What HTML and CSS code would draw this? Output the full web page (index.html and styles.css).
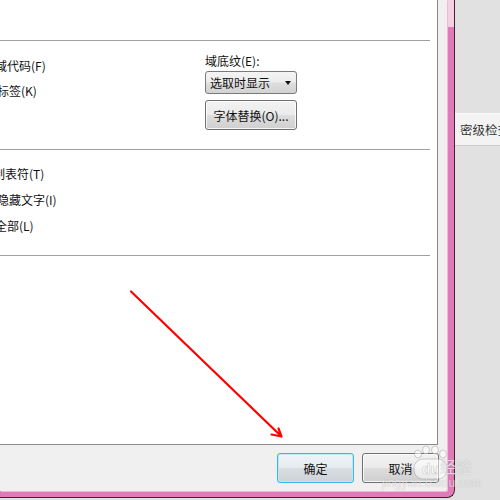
FILE: index.html
```html
<!DOCTYPE html>
<html lang="zh-CN">
<head>
<meta charset="utf-8">
<title>选项</title>
<link rel="stylesheet" href="styles.css">
</head>
<body>
<div class="window">
  <div class="client">
    <div class="panel">
      <div class="top"></div>
      <div class="sep"></div>
      <div class="sec1">
        <div class="col-left">
          <div class="row cut5">域代码(F)</div>
          <div class="row cut3">标签(K)</div>
        </div>
        <div class="col-right">
          <div class="label">域底纹(E):</div>
          <div class="select"><span>选取时显示</span><span class="caret"></span></div>
          <div class="btn btn-font">字体替换(O)...</div>
        </div>
      </div>
      <div class="sep"></div>
      <div class="sec2">
        <div class="row cut7">制表符(T)</div>
        <div class="row cut3">隐藏文字(I)</div>
        <div class="row cut5">全部(L)</div>
      </div>
      <div class="sep"></div>
    </div>
    <div class="footer">
      <div class="btn btn-ok">确定</div>
      <div class="btn btn-cancel">取消</div>
    </div>
  </div>
</div>
<div class="side">
  <div class="tab">密级检查</div>
</div>

<svg class="arrow" width="500" height="500" viewBox="0 0 500 500">
  <path d="M131 291.5 L281.5 436.5 M281.5 436.5 L271.5 434.5 M281.5 436.5 L278.5 428.5" fill="none" stroke="#ff0000" stroke-width="2.2" stroke-linecap="round"/>
</svg>

<div class="watermark">
  <svg class="paw" width="40" height="36" viewBox="0 0 40 36">
    <g fill="rgba(255,255,255,0.55)" stroke="rgba(120,120,120,0.35)" stroke-width="1">
      <ellipse cx="8" cy="9" rx="3.5" ry="4"/>
      <ellipse cx="16" cy="5" rx="3.5" ry="4"/>
      <ellipse cx="25" cy="5" rx="3.5" ry="4"/>
      <ellipse cx="33" cy="9" rx="3.5" ry="4"/>
      <rect x="4" y="14" width="33" height="20" rx="9"/>
    </g>
    <text x="20.5" y="29" text-anchor="middle" class="du">du</text>
  </svg>
  <span class="wm-text">经验</span>
  <div class="wm-url">jingyan.baidu.com</div>
</div>
</body>
</html>
```
FILE: styles.css
```css
html, body {
  margin: 0;
  padding: 0;
}
body {
  width: 500px;
  height: 500px;
  overflow: hidden;
  background: #e1e1e1;
  display: flex;
  align-items: flex-start;
  font-family: "Noto Sans CJK SC", "Open Sans", sans-serif;
  font-size: 12px;
  color: #111;
}
.window {
  width: 455px;
  height: 498px;
  box-sizing: border-box;
  padding: 0 7px 6px 0;
  border-right: 1px solid #3d2433;
  border-bottom: 1px solid #3d2433;
  border-bottom-right-radius: 8px;
  background: linear-gradient(to bottom, #f5d0e4 0, #f5d0e4 27px, #e07ab9 27px, #e07ab9 100%);
  flex: none;
}
.client {
  width: 447px;
  height: 491px;
  background: #f0f0f0;
  display: flex;
  flex-direction: column;
  border-bottom-right-radius: 2px;
  box-shadow: 1px 1px 0 #f2b8d8;
}
.panel {
  width: 438px;
  height: 445px;
  box-sizing: border-box;
  background: #fff;
  border-right: 1px solid #8a8a8a;
  border-bottom: 1px solid #8a8a8a;
  flex: none;
  overflow: hidden;
}
.top { height: 40px; }
.sep {
  width: 430px;
  height: 1px;
  background: #a0a0a0;
}
.sec1 {
  height: 108px;
  display: flex;
}
.col-left {
  width: 205px;
  padding-top: 12px;
  box-sizing: border-box;
}
.row {
  height: 25px;
  line-height: 25px;
  white-space: nowrap;
}
.cut3 { margin-left: -3px; }
.cut5 { margin-left: -5px; }
.cut7 { margin-left: -7px; }
.col-right {
  padding-top: 12px;
  display: flex;
  flex-direction: column;
  align-items: flex-start;
}
.label {
  height: 16px;
  line-height: 16px;
  white-space: nowrap;
}
.select {
  margin-top: 2px;
  width: 92px;
  height: 23px;
  box-sizing: border-box;
  border: 1px solid #7a7a7a;
  border-radius: 3px;
  background: linear-gradient(to bottom, #f4f4f4 0%, #ececec 48%, #dedede 52%, #d2d2d2 100%);
  display: flex;
  align-items: center;
  justify-content: space-between;
  padding: 0 5px 0 4px;
  line-height: 20px;
  white-space: nowrap;
}
.caret {
  width: 0;
  height: 0;
  border-left: 3.5px solid transparent;
  border-right: 3.5px solid transparent;
  border-top: 4px solid #111;
}
.btn {
  box-sizing: border-box;
  border: 1px solid #707070;
  border-radius: 3px;
  background: linear-gradient(to bottom, #f2f2f2 0%, #ebebeb 48%, #dddddd 52%, #cfcfcf 100%);
  box-shadow: inset 0 0 0 1px rgba(255,255,255,0.8);
  display: flex;
  align-items: center;
  justify-content: center;
  white-space: nowrap;
}
.btn-font {
  margin-top: 6px;
  width: 92px;
  height: 30px;
}
.sec2 {
  height: 105px;
  padding-top: 11px;
  box-sizing: border-box;
}
.sec2 .row {
  height: 26px;
  line-height: 26px;
}
.footer {
  flex: 1;
  display: flex;
  justify-content: flex-end;
  align-items: flex-start;
  gap: 8px;
  padding: 8px 8px 0 0;
}
.btn-ok, .btn-cancel {
  width: 77px;
  height: 30px;
}
.btn-ok {
  border-color: #3cb6e8;
  background: linear-gradient(to bottom, #eef3f6 0%, #e6ecf0 48%, #d9dee2 52%, #ccd2d6 100%);
  box-shadow: inset 0 0 0 1px #bfe7f7;
}
.side {
  flex: 1;
  height: 500px;
  overflow: hidden;
}
.tab {
  margin-top: 113px;
  height: 33px;
  box-sizing: border-box;
  background: #f3f3f3;
  border-top: 1px solid #fafafa;
  border-bottom: 1px solid #cdcdcd;
  padding-left: 5px;
  line-height: 31px;
  white-space: nowrap;
  color: #333;
  font-size: 12.5px;
}
.arrow {
  position: absolute;
  left: 0;
  top: 0;
  pointer-events: none;
}
.watermark {
  position: absolute;
  left: 380px;
  top: 444px;
  width: 110px;
  height: 50px;
  pointer-events: none;
}
.paw {
  position: absolute;
  left: 30px;
  top: 1px;
}
.du {
  font-family: "Liberation Sans", sans-serif;
  font-weight: bold;
  font-size: 14px;
  fill: rgba(255,255,255,0.85);
  stroke: rgba(110,110,110,0.35);
  stroke-width: 0.6;
}
.wm-text {
  position: absolute;
  left: 60px;
  top: 12px;
  font-size: 16px;
  line-height: 20px;
  color: rgba(255,255,255,0.7);
  text-shadow: 0 0 1px rgba(90,90,90,0.45);
}
.wm-url {
  position: absolute;
  left: 2px;
  top: 33px;
  font-family: "Liberation Sans", sans-serif;
  font-size: 12px;
  line-height: 12px;
  letter-spacing: 0.2px;
  color: rgba(255,255,255,0.6);
  text-shadow: 0 0 1px rgba(90,90,90,0.35);
}
```
